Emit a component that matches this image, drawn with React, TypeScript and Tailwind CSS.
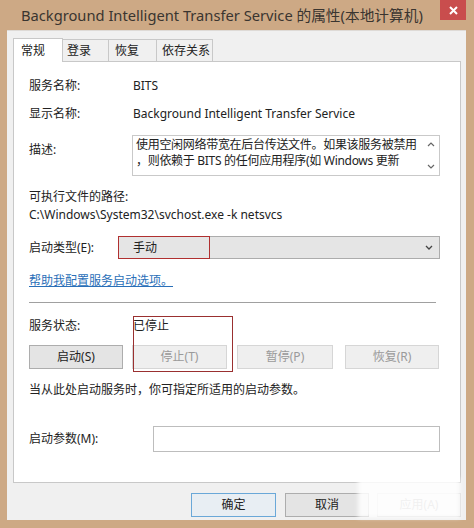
import React from "react";

const font = { fontFamily: '"Segoe UI", "Noto Sans", "Noto Sans CJK SC", sans-serif' };

function Btn({ label, disabled, focus, className = "" }: { label: string; disabled?: boolean; focus?: boolean; className?: string }) {
  return (
    <div
      className={`flex items-center justify-center h-[24px] border text-[12px] ${
        focus ? "border-[#6aa8d8] bg-[#e8eef3]" : disabled ? "border-[#d6d6d6] bg-[#efefef] text-[#9a9a9a]" : "border-[#adadad] bg-[#e4e4e4] text-[#222]"
      } ${className}`}
    >
      {label}
    </div>
  );
}

export default function App() {
  return (
    <div className="w-[474px] h-[528px] bg-[#cda985] flex flex-col overflow-hidden relative text-[#222]" style={font}>
      {/* Title bar */}
      <div className="h-[30px] flex items-start relative">
        <div className="pl-[21px] pt-[4px] text-[14.7px] text-[#3a3530] whitespace-nowrap">
          Background Intelligent Transfer Service 的属性(本地计算机)
        </div>
        <div className="absolute right-[8px] top-0 w-[26px] h-[20px] bg-[#c94d4d] flex items-center justify-center">
          <svg width="9" height="9" viewBox="0 0 9 9">
            <path d="M1 1 L8 8 M8 1 L1 8" stroke="#fff" strokeWidth="2" />
          </svg>
        </div>
      </div>

      {/* Body */}
      <div className="ml-[7px] mr-[8px] h-[490px] bg-[#f0f0f0] border-t border-[#dedad6] flex flex-col pl-[6px] pr-[5px] pt-[7px]">
        {/* Tabs */}
        <div className="flex items-end h-[23px] text-[12px]">
          <div className="w-[50px] h-[24px] bg-white border border-b-0 border-[#c8c8c8] pl-[7px] pt-[3px] relative z-10 -mb-px">常规</div>
          <div className="w-[46px] h-[22px] border border-l-0 border-b-0 border-[#c8c8c8] bg-[#f0f0f0] pl-[4px] pt-[2px]">登录</div>
          <div className="w-[48px] h-[22px] border border-l-0 border-b-0 border-[#c8c8c8] bg-[#f0f0f0] pl-[6px] pt-[2px]">恢复</div>
          <div className="w-[56px] h-[22px] border border-l-0 border-b-0 border-[#c8c8c8] bg-[#f0f0f0] pl-[5px] pt-[2px]">依存关系</div>
        </div>

        {/* Panel */}
        <div className="h-[422px] bg-white border border-[#c8c8c8] pl-[15px] pr-[20px] text-[12px] flex flex-col">
          <div className="flex mt-[16px] h-[16px] items-center">
            <div className="w-[104px]">服务名称:</div>
            <div>BITS</div>
          </div>
          <div className="flex mt-[12px] h-[16px] items-center">
            <div className="w-[104px]">显示名称:</div>
            <div>Background Intelligent Transfer Service</div>
          </div>
          <div className="flex mt-[13px] h-[41px]">
            <div className="w-[103px] pt-[6px]">描述:</div>
            <div className="flex-1 border border-[#c9c9c9] flex">
              <div className="flex-1 pl-[3px] pt-[1px] leading-[16px] text-[12px] overflow-hidden whitespace-nowrap tracking-[-0.3px]">
                使用空闲网络带宽在后台传送文件。如果该服务被禁用
                <br />
                ，则依赖于 BITS 的任何应用程序(如 Windows 更新
              </div>
              <div className="w-[16px] flex flex-col items-center justify-between py-[6px]">
                <svg width="8" height="5" viewBox="0 0 8 5"><path d="M1 4 L4 1 L7 4" stroke="#666" strokeWidth="1.2" fill="none" /></svg>
                <svg width="8" height="5" viewBox="0 0 8 5"><path d="M1 1 L4 4 L7 1" stroke="#666" strokeWidth="1.2" fill="none" /></svg>
              </div>
            </div>
          </div>
          <div className="mt-[13px] h-[16px] flex items-center">可执行文件的路径:</div>
          <div className="mt-[2px] h-[16px] flex items-center">C:\Windows\System32\svchost.exe -k netsvcs</div>
          <div className="flex mt-[13px] h-[23px] items-center relative">
            <div className="w-[89px]">启动类型(E):</div>
            <div className="flex-1 h-[23px] border border-[#acacac] bg-[#e5e5e5] flex items-center pl-[14px] pr-[6px]">
              <div className="flex-1">手动</div>
              <svg width="8" height="5" viewBox="0 0 8 5"><path d="M1 1 L4 4 L7 1" stroke="#444" strokeWidth="1.3" fill="none" /></svg>
            </div>
            <div className="absolute left-[89px] top-0 w-[92px] h-[23px] border border-[#b03030]" />
          </div>
          <div className="mt-[14px] h-[16px] flex items-center">
            <span className="text-[#2a6fb8] underline">帮助我配置服务启动选项。</span>
          </div>
          <div className="mt-[13px] h-px bg-[#a0a0a0] mr-[4px]" />
          <div className="flex mt-[15px] h-[16px] items-center relative">
            <div className="w-[104px]">服务状态:</div>
            <div>已停止</div>
            <div className="absolute left-[104px] top-[-2px] w-[100px] h-[56px] border border-[#9a3030] z-10" />
          </div>
          <div className="flex mt-[11px] gap-[9px]">
            <Btn label="启动(S)" className="w-[94px]" />
            <Btn label="停止(T)" disabled className="w-[95px]" />
            <Btn label="暂停(P)" disabled className="w-[96px] ml-[1px]" />
            <Btn label="恢复(R)" disabled className="w-[94px] ml-[3px]" />
          </div>
          <div className="mt-[13px] h-[16px] flex items-center">当从此处启动服务时，你可指定所适用的启动参数。</div>
          <div className="flex mt-[28px] items-center h-[26px]">
            <div className="w-[124px]">启动参数(M):</div>
            <div className="flex-1 h-[26px] border border-[#bdbdbd] bg-white" />
          </div>
        </div>

        {/* Bottom buttons */}
        <div className="flex justify-end mt-[10px]">
          <Btn label="确定" focus className="w-[85px] text-[#222]" />
          <Btn label="取消" className="w-[84px] ml-[9px]" />
          <Btn label="应用(A)" disabled className="w-[84px] ml-[8px]" />
        </div>
      </div>

      {/* watermark blur */}
      <div className="absolute left-[358px] top-[478px] w-[102px] h-[40px] bg-white/85 blur-[2px]" />
    </div>
  );
}
